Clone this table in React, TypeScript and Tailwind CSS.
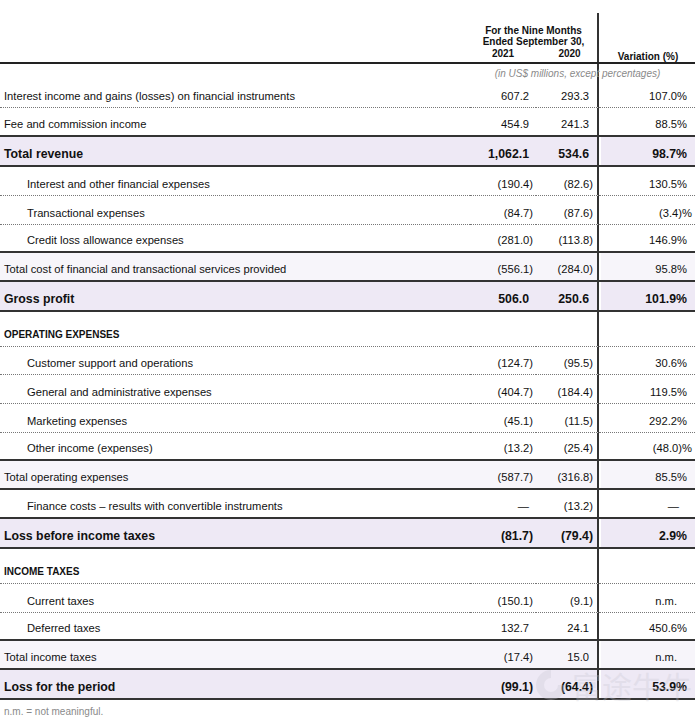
import React from "react";

type Kind = "normal" | "total" | "strong" | "section";
type Row = {
  label: string;
  indent?: boolean;
  kind: Kind;
  a?: string;
  b?: string;
  v?: string;
  h: number;
  line: "dotted" | "solid";
};

const rows: Row[] = [
  { label: "Interest income and gains (losses) on financial instruments", kind: "normal", a: "607.2", b: "293.3", v: "107.0%", h: 28, line: "dotted" },
  { label: "Fee and commission income", kind: "normal", a: "454.9", b: "241.3", v: "88.5%", h: 29, line: "solid" },
  { label: "Total revenue", kind: "strong", a: "1,062.1", b: "534.6", v: "98.7%", h: 30, line: "solid" },
  { label: "Interest and other financial expenses", indent: true, kind: "normal", a: "(190.4)", b: "(82.6)", v: "130.5%", h: 29, line: "dotted" },
  { label: "Transactional expenses", indent: true, kind: "normal", a: "(84.7)", b: "(87.6)", v: "(3.4)%", h: 29, line: "dotted" },
  { label: "Credit loss allowance expenses", indent: true, kind: "normal", a: "(281.0)", b: "(113.8)", v: "146.9%", h: 28, line: "solid" },
  { label: "Total cost of financial and transactional services provided", kind: "total", a: "(556.1)", b: "(284.0)", v: "95.8%", h: 29, line: "solid" },
  { label: "Gross profit", kind: "strong", a: "506.0", b: "250.6", v: "101.9%", h: 30, line: "solid" },
  { label: "OPERATING EXPENSES", kind: "section", h: 35, line: "dotted" },
  { label: "Customer support and operations", indent: true, kind: "normal", a: "(124.7)", b: "(95.5)", v: "30.6%", h: 28, line: "dotted" },
  { label: "General and administrative expenses", indent: true, kind: "normal", a: "(404.7)", b: "(184.4)", v: "119.5%", h: 29, line: "dotted" },
  { label: "Marketing expenses", indent: true, kind: "normal", a: "(45.1)", b: "(11.5)", v: "292.2%", h: 29, line: "dotted" },
  { label: "Other income (expenses)", indent: true, kind: "normal", a: "(13.2)", b: "(25.4)", v: "(48.0)%", h: 28, line: "solid" },
  { label: "Total operating expenses", kind: "total", a: "(587.7)", b: "(316.8)", v: "85.5%", h: 29, line: "solid" },
  { label: "Finance costs – results with convertible instruments", indent: true, kind: "normal", a: "—", b: "(13.2)", v: "—", h: 29, line: "solid" },
  { label: "Loss before income taxes", kind: "strong", a: "(81.7)", b: "(79.4)", v: "2.9%", h: 30, line: "solid" },
  { label: "INCOME TAXES", kind: "section", h: 35, line: "dotted" },
  { label: "Current taxes", indent: true, kind: "normal", a: "(150.1)", b: "(9.1)", v: "n.m.", h: 29, line: "dotted" },
  { label: "Deferred taxes", indent: true, kind: "normal", a: "132.7", b: "24.1", v: "450.6%", h: 28, line: "solid" },
  { label: "Total income taxes", kind: "total", a: "(17.4)", b: "15.0", v: "n.m.", h: 29, line: "solid" },
  { label: "Loss for the period", kind: "strong", a: "(99.1)", b: "(64.4)", v: "53.9%", h: 30, line: "solid" },
];

function bgFor(kind: Kind) {
  if (kind === "strong") return "bg-[#eee9f5]";
  if (kind === "total") return "bg-[#f7f5fa]";
  return "";
}

function lineCls(line: "dotted" | "solid") {
  return line === "dotted"
    ? "border-b border-b-[#777] [border-bottom-style:dotted]"
    : "border-b-2 border-b-[#333]";
}

function numPad(v: string | undefined, col: "a" | "b") {
  if (!v) return "";
  const paren = v.endsWith(")");
  if (col === "a") return paren ? "pr-[3px]" : "pr-[7px]";
  return paren ? "pr-[4px]" : "pr-[8px]";
}

function varPad(v: string | undefined) {
  if (!v) return "";
  if (v === "—") return "pr-[16px]";
  if (v === "n.m.") return "pr-[18px]";
  if (v.endsWith(")%")) return "pr-[3px]";
  return "pr-[8px]";
}

function TableRow({ r }: { r: Row }) {
  const bg = bgFor(r.kind);
  const lc = lineCls(r.line);
  const strong = r.kind === "strong";
  const labelText =
    r.kind === "section"
      ? "text-[10px] font-bold"
      : strong
      ? "text-[12.3px] font-bold"
      : "text-[11.2px]";
  const numText = strong ? "text-[12.3px] font-bold" : "text-[11.2px]";
  return (
    <div className="flex" style={{ height: r.h }}>
      <div
        className={`w-[470px] flex items-end pb-[4px] leading-[14px] ${lc} ${bg} ${
          r.indent ? "pl-[27px]" : "pl-[4px]"
        } ${labelText}`}
      >
        {r.label}
      </div>
      <div
        className={`w-[66px] flex items-end justify-end pb-[4px] leading-[14px] ${lc} ${bg} ${numText} ${numPad(
          r.a,
          "a"
        )}`}
      >
        {r.a}
      </div>
      <div
        className={`w-[63px] flex items-end justify-end pb-[4px] leading-[14px] border-r-2 border-r-[#333] ${lc} ${bg} ${numText} ${numPad(
          r.b,
          "b"
        )}`}
      >
        {r.b}
      </div>
      <div className={`w-[96px] flex ${lc}`}>
        <div
          className={`flex-1 ml-[2px] flex items-end justify-end pb-[4px] leading-[14px] ${bg} ${numText} ${varPad(
            r.v
          )}`}
        >
          {r.v}
        </div>
      </div>
    </div>
  );
}

export default function App() {
  return (
    <div
      className="relative w-[700px] h-[722px] bg-white text-[#111] overflow-hidden"
      style={{ fontFamily: '"Liberation Sans", Arial, sans-serif' }}
    >
      <div className="w-[695px]">
        {/* Header */}
        <div className="flex h-[64px]">
          <div className="w-[470px] border-b-2 border-b-[#222]" />
          <div className="w-[129px] border-b-2 border-b-[#222] flex flex-col">
            <div className="mt-[13px] flex-1 border-r-2 border-r-[#333] flex flex-col justify-end items-center pb-[3px] text-[10px] font-bold leading-[11.5px]">
              <div>For the Nine Months</div>
              <div>Ended September 30,</div>
              <div className="flex w-full">
                <div className="w-[66px] text-center">2021</div>
                <div className="flex-1 text-center pl-[6px]">2020</div>
              </div>
            </div>
          </div>
          <div className="w-[96px] border-b-2 border-b-[#222] flex items-end justify-center pb-0 pl-[2px] text-[10px] font-bold leading-[11.5px]">
            Variation (%)
          </div>
        </div>

        {/* Units row */}
        <div className="relative flex h-[16px]">
          <div className="w-[470px]" />
          <div className="w-[66px]" />
          <div className="w-[63px] border-r-2 border-r-[#333]" />
          <div className="w-[96px]" />
          <div className="absolute left-[460px] top-[2px] w-[235px] h-[16px] flex items-center justify-center text-[10px] italic text-[#8a8a8a] leading-[14px]">
            (in US$ millions, except percentages)
          </div>
        </div>

        {rows.map((r, i) => (
          <TableRow key={i} r={r} />
        ))}
      </div>

      <div className="mt-[5px] pl-[4px] text-[10px] leading-[14px] text-[#8a8a8a]">
        n.m. = not meaningful.
      </div>

      {/* Watermark */}
      <div className="absolute left-[534px] top-[668px] flex items-center gap-[4px] pointer-events-none opacity-30">
        <svg width="34" height="34" viewBox="0 0 34 34">
          <path
            d="M17 2 A15 15 0 1 0 32 17 L24 17 A7 7 0 1 1 17 10 Z"
            fill="#c8c8d2"
          />
        </svg>
        <span
          className="text-[30px] leading-[34px] text-[#c8c8d2]"
          style={{ fontFamily: '"Noto Sans CJK SC", sans-serif' }}
        >
          富途牛牛
        </span>
      </div>
    </div>
  );
}
